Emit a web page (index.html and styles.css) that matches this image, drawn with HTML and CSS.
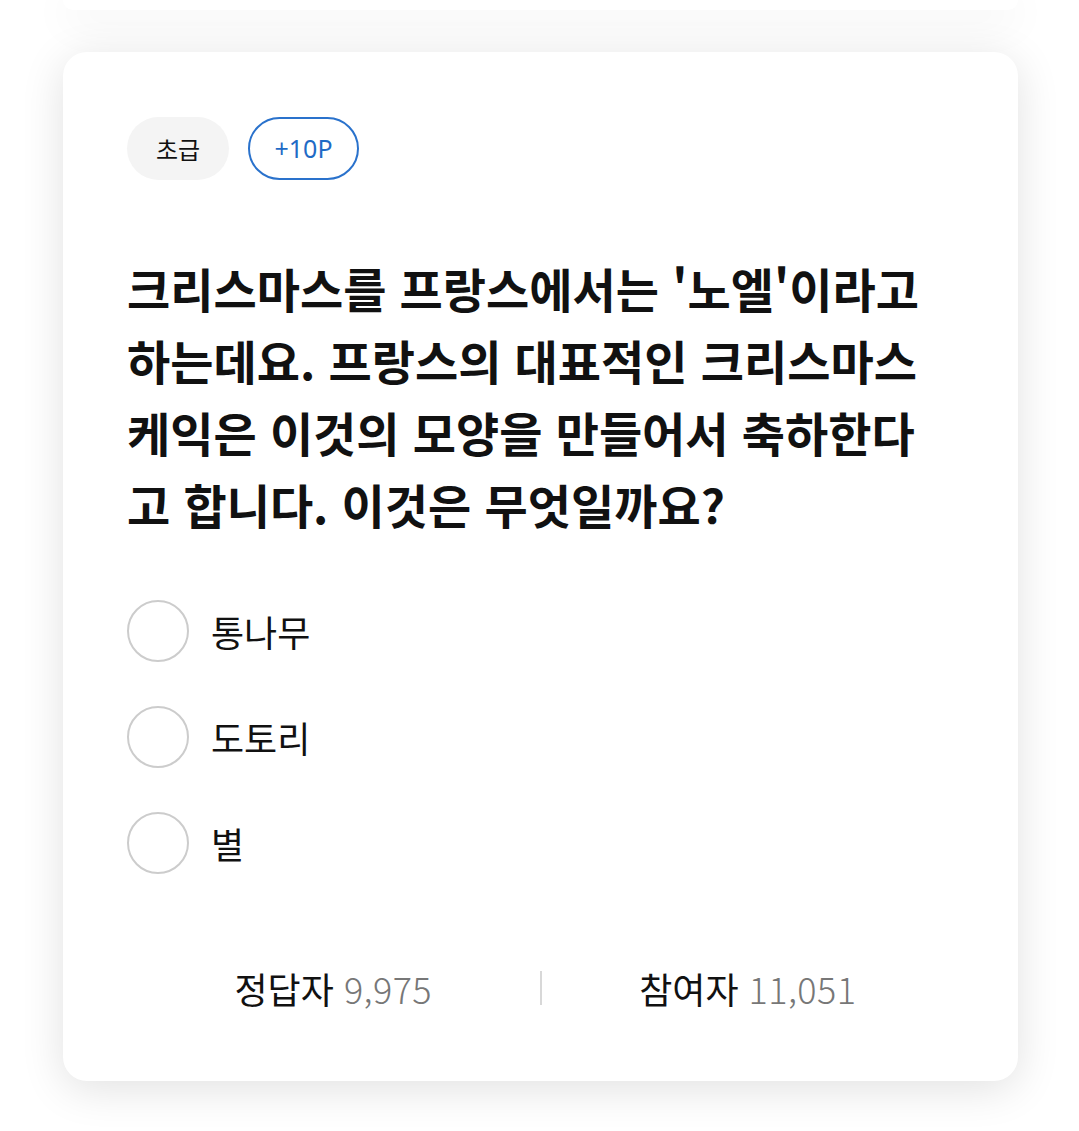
FILE: index.html
```html
<!DOCTYPE html>
<html lang="ko">
<head>
<meta charset="utf-8">
<link rel="stylesheet" href="styles.css">
</head>
<body>
<div class="list">
  <div class="card card-prev"></div>
  <div class="card quiz">
    <div class="chips">
      <span class="chip level">초급</span>
      <span class="chip point">+10P</span>
    </div>
    <p class="question">크리스마스를 프랑스에서는 '노엘'이라고 하는데요. 프랑스의 대표적인 크리스마스 케익은 이것의 모양을 만들어서 축하한다고 합니다. 이것은 무엇일까요?</p>
    <ul class="options">
      <li class="option"><span class="radio"></span><span class="label">통나무</span></li>
      <li class="option"><span class="radio"></span><span class="label">도토리</span></li>
      <li class="option"><span class="radio"></span><span class="label">별</span></li>
    </ul>
    <div class="stats">
      <div class="stat"><span class="stat-name">정답자</span> <span class="stat-num">9,975</span></div>
      <span class="divider"></span>
      <div class="stat"><span class="stat-name">참여자</span> <span class="stat-num">11,051</span></div>
    </div>
  </div>
</div>
</body>
</html>
```

FILE: styles.css
```css
* { box-sizing: border-box; }
html, body {
  margin: 0;
  padding: 0;
  background: #ffffff;
  font-family: "Noto Sans CJK KR", "Noto Sans", sans-serif;
  color: #111111;
}
.list {
  display: flex;
  flex-direction: column;
  gap: 42px;
  padding: 0 61px 51px 63px;
}
.card {
  background: #ffffff;
  border-radius: 24px;
  box-shadow: 0 8px 44px rgba(0, 0, 0, 0.12);
}
.card-prev {
  height: 10px;
  border-radius: 0 0 24px 24px;
}
.quiz {
  height: 1029px;
  padding: 65px 64px 0 64px;
  display: flex;
  flex-direction: column;
}
.chips {
  display: flex;
  gap: 19px;
}
.chip {
  height: 63px;
  border-radius: 32px;
  display: flex;
  align-items: center;
  justify-content: center;
  font-size: 24px;
  line-height: 1;
}
.level {
  width: 102px;
  background: #f4f4f4;
  color: #111;
}
.point {
  width: 111px;
  border: 2px solid #2a72cc;
  color: #1f6bc6;
  font-family: "Noto Sans", sans-serif;
  font-size: 25px;
}
.question {
  margin: 72px 0 0 0;
  padding-right: 20px;
  font-size: 47px;
  font-weight: 700;
  line-height: 72px;
  letter-spacing: 0;
  color: #111;
}
.options {
  list-style: none;
  margin: 60px 0 0 0;
  padding: 0;
  display: flex;
  flex-direction: column;
  gap: 44px;
}
.option {
  display: flex;
  align-items: center;
  gap: 22px;
  height: 62px;
}
.radio {
  width: 62px;
  height: 62px;
  border-radius: 50%;
  border: 2px solid #cccccc;
  flex: none;
}
.label {
  font-size: 36px;
  color: #111;
}
.stats {
  margin-top: 96px;
  display: flex;
  align-items: center;
}
.stat {
  flex: 1;
  text-align: center;
  font-size: 36px;
  line-height: 1;
}
.stat-num {
  color: #777777;
  font-weight: 300;
  letter-spacing: 0.4px;
}
.divider {
  width: 2px;
  height: 34px;
  background: #d8d8d8;
  flex: none;
}
```
